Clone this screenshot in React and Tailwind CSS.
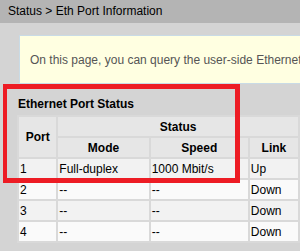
import React from 'react'

const rows = [
  { port: '1', mode: 'Full-duplex', speed: '1000 Mbit/s', link: 'Up' },
  { port: '2', mode: '--', speed: '--', link: 'Down' },
  { port: '3', mode: '--', speed: '--', link: 'Down' },
  { port: '4', mode: '--', speed: '--', link: 'Down' },
]

const App = () => {
  return (
    <div className="relative w-[300px] h-[251px] overflow-hidden bg-[#d4d4d4] font-['Liberation_Sans',Arial,sans-serif] text-[12px] text-black">
      <div className="h-[23px] bg-[#b4b4b4] pl-2 leading-[23px] whitespace-nowrap">
        Status &gt; Eth Port Information
      </div>

      <div className="pl-[19px] pt-[12px]">
        <div className="h-[49px] w-[360px] bg-[#ffffe1] border border-[#c9dbe6] pl-[10px] flex items-center text-[#555] whitespace-nowrap">
          On this page, you can query the user-side Ethernet port information.
        </div>

        <div className="h-[31px] pt-[13px] leading-[14px] font-bold -ml-px whitespace-nowrap">
          Ethernet Port Status
        </div>

        <table className="-ml-[2px] table-fixed border-separate border-spacing-[2px] bg-[#d9d9d9] leading-[14px] whitespace-nowrap">
          <thead>
            <tr className="h-[19px] bg-[#e6e6e6] font-bold">
              <th rowSpan={2} className="w-[38px] p-0 text-center">Port</th>
              <th colSpan={3} className="p-0 text-center">Status</th>
            </tr>
            <tr className="h-[19px] bg-[#e6e6e6] font-bold">
              <th className="w-[92px] p-0 text-center">Mode</th>
              <th className="w-[99px] p-0 text-center">Speed</th>
              <th className="w-[49px] p-0 text-center">Link</th>
            </tr>
          </thead>
          <tbody>
            {rows.map((r, i) => (
              <tr key={r.port} className={i % 2 === 0 ? 'h-[19px] bg-[#f2f2f2]' : 'h-[19px] bg-[#fafafa]'}>
                <td className="p-0 pl-px">{r.port}</td>
                <td className="p-0 pl-px">{r.mode}</td>
                <td className="p-0 pl-px">{r.speed}</td>
                <td className="p-0 pl-px">{r.link}</td>
              </tr>
            ))}
          </tbody>
        </table>
      </div>

      <div className="absolute left-[3px] top-[84px] w-[237px] h-[99px] border-[5px] border-l-[4px] border-[#ed1c24]" />
    </div>
  )
}

export default App
